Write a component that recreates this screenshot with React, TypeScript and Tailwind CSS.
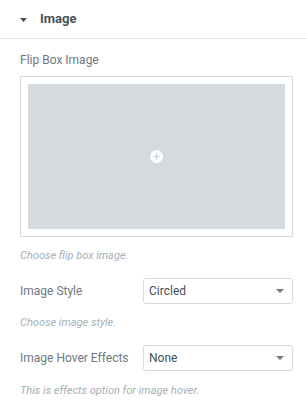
export default function App() {
  const font = { fontFamily: "Roboto, 'Liberation Sans', sans-serif" };
  return (
    <div className="w-[306px] h-[408px] bg-white" style={font}>
      <div className="h-[39px] flex items-center pl-[20px] border-b border-[#e6e9ec]">
        <svg width="7" height="4" viewBox="0 0 7 4" className="mr-[13px] mt-[1px]">
          <path d="M0 0h7L3.5 4z" fill="#495157" />
        </svg>
        <span className="text-[13px] font-bold text-[#495157]">Image</span>
      </div>
      <div className="pl-[20px] pr-[13px]">
        <div className="mt-[14px] text-[12px] leading-[14px] text-[#6d7882]">Flip Box Image</div>
        <div className="mt-[9px] h-[161px] border border-[#d5dadf] p-[7px]">
          <div className="h-full bg-[#d5dadf] flex items-center justify-center">
            <svg width="13" height="13" viewBox="0 0 13 13">
              <circle cx="6.5" cy="6.5" r="6.5" fill="#ffffff" />
              <path d="M6.5 3.2v6.6M3.2 6.5h6.6" stroke="#d5dadf" strokeWidth="1.6" />
            </svg>
          </div>
        </div>
        <div className="mt-[12px] text-[11px] leading-[13px] italic text-[#a4afb7]">Choose flip box image.</div>
        <div className="mt-[16px] flex items-center">
          <span className="w-[123px] text-[12px] text-[#6d7882]">Image Style</span>
          <div className="flex-1 h-[26px] border border-[#d5dadf] rounded-[3px] flex items-center justify-between pl-[5px] pr-[8px]">
            <span className="text-[12px] text-[#495157]">Circled</span>
            <svg width="8" height="4" viewBox="0 0 8 4">
              <path d="M0 0h8L4 4z" fill="#6d7882" />
            </svg>
          </div>
        </div>
        <div className="mt-[12px] text-[11px] leading-[13px] italic text-[#a4afb7]">Choose image style.</div>
        <div className="mt-[16px] flex items-center">
          <span className="w-[123px] text-[12px] text-[#6d7882]">Image Hover Effects</span>
          <div className="flex-1 h-[26px] border border-[#d5dadf] rounded-[3px] flex items-center justify-between pl-[5px] pr-[8px]">
            <span className="text-[12px] text-[#495157]">None</span>
            <svg width="8" height="4" viewBox="0 0 8 4">
              <path d="M0 0h8L4 4z" fill="#6d7882" />
            </svg>
          </div>
        </div>
        <div className="mt-[13px] text-[11px] leading-[13px] italic text-[#a4afb7]">This is effects option for image hover.</div>
      </div>
    </div>
  );
}
